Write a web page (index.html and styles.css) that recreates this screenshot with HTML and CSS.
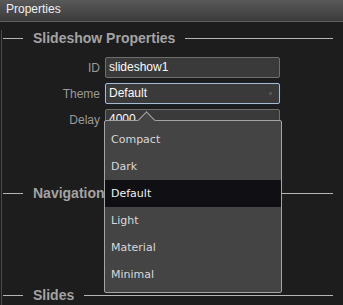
FILE: index.html
```html
<!DOCTYPE html>
<html>
<head>
    <title>Properties</title>
    <link rel="stylesheet" href="styles.css">
</head>
<body>
    <div class="title">Properties</div>
    <div class="content">
        <div class="group-head first">
            <span class="line short"></span>
            <span class="group-name">Slideshow Properties</span>
            <span class="line"></span>
        </div>
        <div class="row">
            <label class="label">ID</label>
            <div class="field">slideshow1</div>
        </div>
        <div class="row">
            <label class="label">Theme</label>
            <div class="field focused">Default<span class="caret"></span></div>
        </div>
        <div class="row">
            <label class="label">Delay</label>
            <div class="field">4000</div>
        </div>

        <div class="group-head nav">
            <span class="line short"></span>
            <span class="group-name">Navigation</span>
            <span class="line"></span>
        </div>

        <div class="group-head slides">
            <span class="line short"></span>
            <span class="group-name">Slides</span>
            <span class="line"></span>
        </div>
    </div>

    <!-- theme dropdown -->
    <div class="dropdown">
        <span class="pointer"></span>
        <div class="item">Compact</div>
        <div class="item">Dark</div>
        <div class="item selected">Default</div>
        <div class="item">Light</div>
        <div class="item">Material</div>
        <div class="item">Minimal</div>
    </div>
</body>
</html>
```

FILE: styles.css
```css
body {
    margin: 0;
    background-color: #1e1d1d;
    font-family: "Liberation Sans", Arial, sans-serif;
    font-size: 12px;
    overflow: hidden;
}

.title {
    height: 21px;
    line-height: 19px;
    padding-left: 6px;
    color: #f0f0f0;
    background: linear-gradient(#595959, #3b3b3b);
    border-bottom: 1px solid #5e5e5e;
}

.content {
    margin-left: 1px;
    padding-left: 1px;
    padding-right: 10px;
    border-left: 1px solid #4a4a4a;
    height: 283px;
}

.group-head {
    display: flex;
    align-items: center;
    gap: 10px;
    height: 16px;
}

.group-head.first {
    margin-top: 8px;
    margin-bottom: 11px;
}

.group-head.nav {
    margin-top: 55px;
}

.group-head.slides {
    margin-top: 86px;
}

.group-name {
    color: #a3a3a3;
    font-size: 14px;
    font-weight: bold;
    line-height: 16px;
}

.line {
    flex: 1;
    height: 1px;
    background-color: #b5b5b5;
}

.line.short {
    flex: none;
    width: 20px;
}

.row {
    display: flex;
    align-items: center;
    gap: 5px;
    margin-bottom: 5px;
}

.label {
    width: 97px;
    text-align: right;
    color: #9a9a9a;
}

.field {
    position: relative;
    box-sizing: border-box;
    width: 175px;
    height: 21px;
    line-height: 19px;
    padding-left: 3px;
    color: #fafafa;
    background-color: #3a3a3a;
    border: 1px solid #6e6e6e;
    border-radius: 2px;
}

.field.focused {
    border-color: #a9bbd3;
    box-shadow: 0 0 0 1px #16202e;
}

.caret {
    position: absolute;
    right: 7px;
    top: 8px;
    width: 3px;
    height: 3px;
    border-radius: 50%;
    background-color: #5c5c5c;
}

.dropdown {
    position: absolute;
    left: 104px;
    top: 120px;
    width: 176px;
    height: 171px;
    padding-top: 5px;
    box-sizing: content-box;
    background-color: #444444;
    border: 1px solid #a5a5a5;
    border-radius: 2px;
    font-family: "DejaVu Sans", Verdana, sans-serif;
    font-size: 11px;
}

.dropdown {
    height: 166px;
}

.pointer {
    position: absolute;
    left: 35px;
    top: -7px;
    width: 12px;
    height: 12px;
    background-color: #444444;
    border-top: 1px solid #a5a5a5;
    border-left: 1px solid #a5a5a5;
    transform: rotate(45deg);
}

.item {
    position: relative;
    height: 27px;
    line-height: 27px;
    padding-left: 6px;
    color: #d8d8dc;
}

.item.selected {
    background-color: #0f0f14;
    color: #f2f2f2;
}
```
